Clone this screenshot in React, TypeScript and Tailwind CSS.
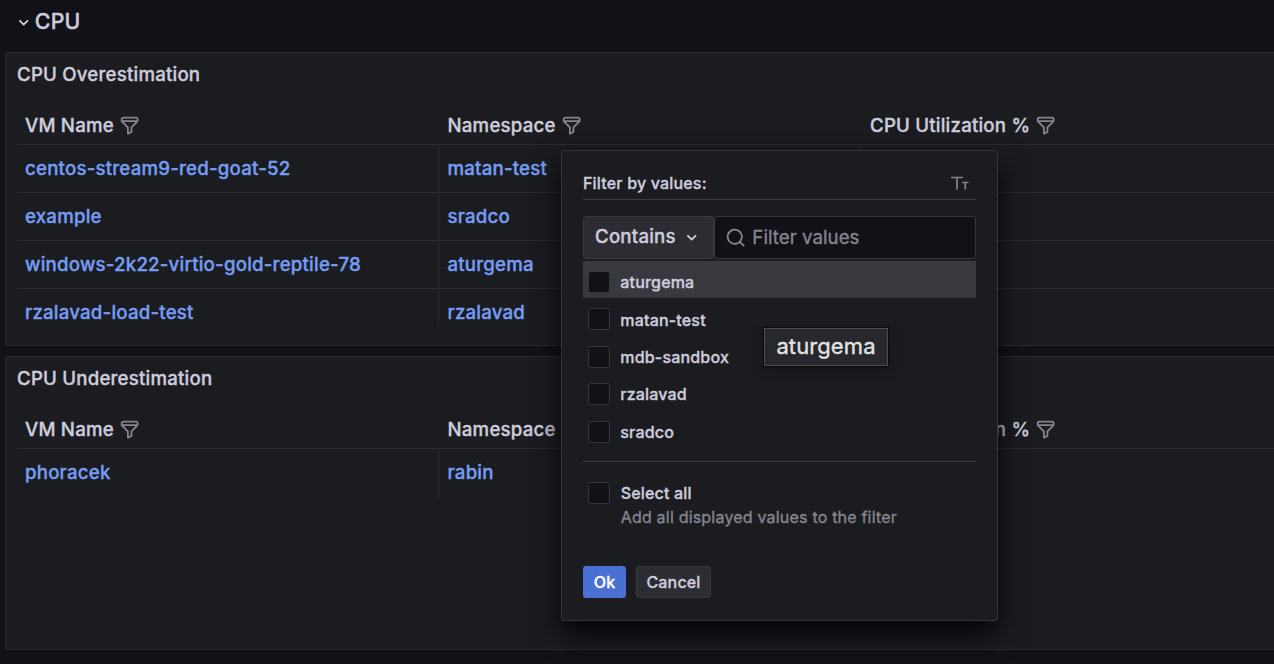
import type { ReactNode } from 'react';

const PATHS = {
  filter:
    'M19,2H5A3,3,0,0,0,2,5V6.17a3,3,0,0,0,.25,1.2l0,.06a2.81,2.81,0,0,0,.59.86L9,14.41V21a1,1,0,0,0,.47.85A1,1,0,0,0,10,22a1,1,0,0,0,.45-.11l4-2A1,1,0,0,0,15,19V14.41l6.12-6.12a2.81,2.81,0,0,0,.59-.86l0-.06A3,3,0,0,0,22,6.17V5A3,3,0,0,0,19,2ZM13.29,13.29A1,1,0,0,0,13,14v4.38l-2,1V14a1,1,0,0,0-.29-.71L5.41,8H18.59ZM20,6H4V5A1,1,0,0,1,5,4H19a1,1,0,0,1,1,1Z',
  angleDown:
    'M17,9.17a1,1,0,0,0-1.41,0L12,12.71,8.46,9.17a1,1,0,0,0-1.41,0,1,1,0,0,0,0,1.42l4.24,4.24a1,1,0,0,0,1.42,0L17,10.59A1,1,0,0,0,17,9.17Z',
  search:
    'M21.71,20.29,18,16.61A9,9,0,1,0,16.61,18l3.68,3.68a1,1,0,0,0,1.42,0A1,1,0,0,0,21.71,20.29ZM11,18a7,7,0,1,1,7-7A7,7,0,0,1,11,18Z',
};

function Icon({ name, className }: { name: keyof typeof PATHS; className?: string }) {
  return (
    <svg viewBox="0 0 24 24" fill="currentColor" className={`size-[21.33px] shrink-0 ${className ?? ''}`}>
      <path d={PATHS[name]} />
    </svg>
  );
}

const COLUMNS = ['VM Name', 'Namespace', 'CPU Utilization %'];

function Panel({ title, rows, className }: { title: string; rows: string[][]; className: string }) {
  return (
    <section
      className={`flex shrink-0 flex-col overflow-hidden rounded-l-[3px] border border-r-0 border-[#2b2c31] bg-[#1b1c20] pl-[11px] ${className}`}
    >
      <h2 className="h-[43px] pt-[1px] text-[18.67px] leading-[42px] font-medium">{title}</h2>
      <div className="grid h-[49px] shrink-0 grid-cols-[422.5px_422.5px_1fr] border-b border-[#2b2c31] pt-[11px]">
        {COLUMNS.map((c) => (
          <div key={c} className="flex h-[37px] items-center gap-[5px] pl-2">
            <span className="leading-[37px]">{c}</span>
            <Icon name="filter" className="mt-[1px] text-[#85858f]" />
          </div>
        ))}
      </div>
      <div className="mb-5 flex min-h-0 flex-col overflow-hidden">
        {rows.map((r, i) => (
          <div
            key={r[0]}
            className={`grid h-12 shrink-0 grid-cols-[422px_423px_1fr] text-[#769df5] ${i < rows.length - 1 ? 'border-b border-[#2b2c31]' : ''}`}
          >
            <a className="border-r border-[#2b2c31] pl-2 leading-[47px]">{r[0]}</a>
            <a className="border-r border-[#2b2c31] pl-[8.5px] leading-[47px]">{r[1]}</a>
            <span />
          </div>
        ))}
      </div>
    </section>
  );
}

function Box({ className }: { className?: string }) {
  return <span className={`size-[22px] shrink-0 rounded-[3px] border bg-[#111217] ${className ?? 'border-[#36373c]'}`} />;
}

function Option({ label, active }: { label: string; active?: boolean }) {
  return (
    <label className={`flex h-[37.4px] items-center gap-[10px] pl-[5px] ${active ? 'bg-[#38393e]' : ''}`}>
      <span className="mt-[4.6px] flex">
        <Box className={active ? 'border-[#38393e]' : 'border-[#36373c]'} />
      </span>
      <span className="mt-[5px] pl-[0.3px] leading-6">{label}</span>
    </label>
  );
}

function Rule({ children, className }: { children?: ReactNode; className?: string }) {
  return <div className={`flex border-b border-[#3b3c41] ${className ?? ''}`}>{children}</div>;
}

function FilterPopup() {
  return (
    <div className="absolute top-[150px] left-[561px] flex h-[471px] w-[437px] flex-col rounded-[3px] border border-[#35363b] bg-[#1b1c20] px-[21px] text-[16px] tracking-[0.18px] shadow-[0_13px_28px_rgb(1,4,9)]">
      <Rule className="h-[49px] shrink-0 items-center justify-between pt-[15px] pr-[7px]">
        <span className="leading-6">Filter by values:</span>
        <svg viewBox="0 0 18 14" className="h-[14px] w-[18px] text-[#85858f]" fill="none" stroke="currentColor" strokeWidth="1.7">
          <path d="M0 1.5H12M6 1.5V13.5M11 6.5H17.5M14.3 6.5V13.5" />
        </svg>
      </Rule>
      <div className="mt-4 flex h-[43px] shrink-0 text-[18.67px] tracking-[0.2px]">
        <button className="flex w-[131px] items-center gap-[5px] rounded-[3px] border border-[#38393e] bg-[#2c2d32] pl-[11px]">
          <span className="pb-[2px] leading-[38px]">Contains</span>
          <Icon name="angleDown" className="mt-[1px]" />
        </button>
        <div className="flex flex-1 items-center gap-[6px] rounded-[3px] border border-[#36373c] bg-[#111217] pl-[10px] font-normal tracking-[0.05px] text-[#85858f]">
          <Icon name="search" />
          <span className="leading-[41px]">Filter values</span>
        </div>
      </div>
      <div className="mt-[2px] flex shrink-0 flex-col">
        <Option label="aturgema" active />
        <Option label="matan-test" />
        <Option label="mdb-sandbox" />
        <Option label="rzalavad" />
        <Option label="sradco" />
      </div>
      <Rule className="h-[14px] shrink-0" />
      <label className="mt-[20px] flex shrink-0 gap-[10.3px] pl-[5.4px]">
        <Box />
        <span className="flex flex-col">
          <span className="leading-[23px]">Select all</span>
          <span className="leading-[25px] font-normal tracking-[0.2px] text-[#85858f]">Add all displayed values to the filter</span>
        </span>
      </label>
      <div className="mt-9 flex h-8 shrink-0 gap-[10px]">
        <button className="w-[43px] rounded-[3px] bg-[#4a70d4] text-white">Ok</button>
        <button className="w-[75px] rounded-[3px] border border-[#38393e] bg-[#2c2d32]">Cancel</button>
      </div>
    </div>
  );
}

export default function App() {
  return (
    <div className="relative flex h-[664px] w-[1274px] flex-col overflow-hidden bg-[#111217] font-['Inter',sans-serif] text-[18.67px] font-medium tracking-[0.2px] text-[#ccccdc] [-webkit-text-stroke:0.35px_currentColor]">
      <header className="flex h-[52px] shrink-0 items-center pb-[9px] pl-[13px]">
        <Icon name="angleDown" className="mt-[2px]" />
        <h1 className="pl-[0.5px] text-[21.33px] font-medium">CPU</h1>
      </header>
      <main className="flex flex-col gap-[10px] pl-[5px]">
        <Panel
          title="CPU Overestimation"
          className="h-[294px]"
          rows={[
            ['centos-stream9-red-goat-52', 'matan-test'],
            ['example', 'sradco'],
            ['windows-2k22-virtio-gold-reptile-78', 'aturgema'],
            ['rzalavad-load-test', 'rzalavad'],
          ]}
        />
        <Panel title="CPU Underestimation" className="h-[294px]" rows={[['phoracek', 'rabin']]} />
      </main>
      <FilterPopup />
      <div className="absolute top-[328px] left-[764px] flex h-[38px] w-[124px] items-center justify-center border border-[#4d4e50] bg-[#26282b] pb-[2px] text-[22px] font-normal tracking-[0.1px] text-[#e3e4e4] shadow-[0_0_1px_1px_#0b0c0e,0_4px_12px_rgba(0,0,0,0.3)]">
        aturgema
      </div>
    </div>
  );
}
